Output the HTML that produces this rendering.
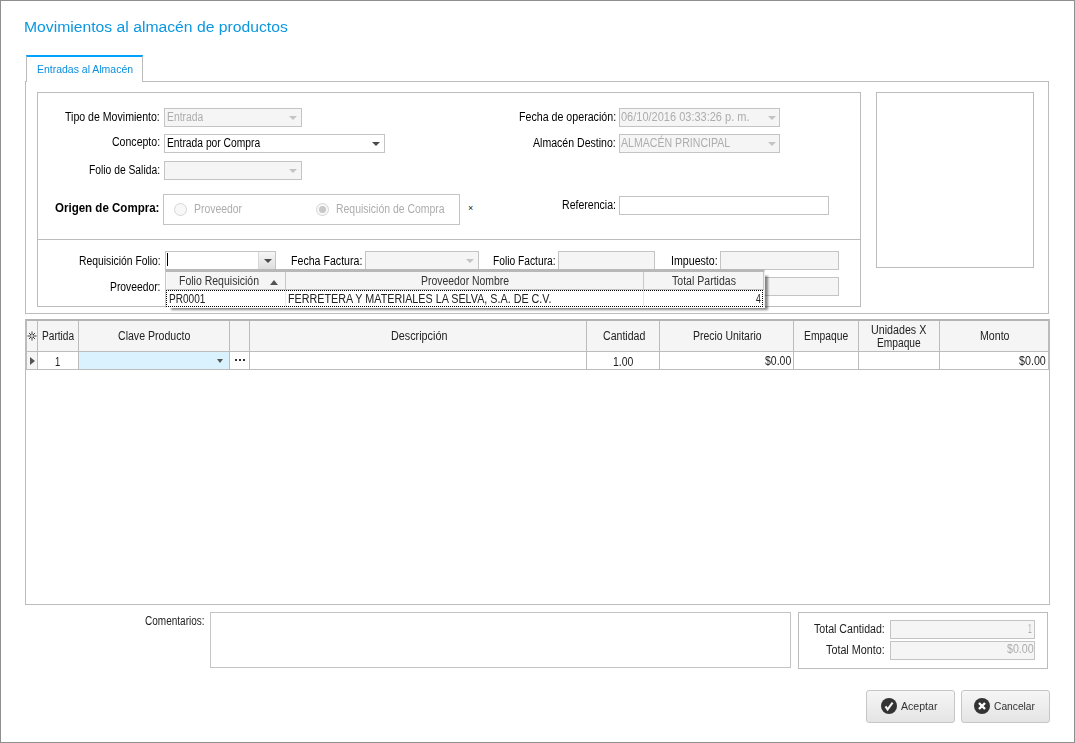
<!DOCTYPE html>
<html><head><meta charset="utf-8">
<style>
*{margin:0;padding:0;box-sizing:border-box}
html,body{width:1075px;height:743px;overflow:hidden;background:#fff}
body{position:relative;font-family:"Liberation Sans",sans-serif;font-size:12px;color:#000}
.a{position:absolute}
.t{position:absolute;white-space:pre;transform-origin:0 0;z-index:3}
.bx{position:absolute;border:1px solid #bcbcbc}
.cb{position:absolute;border:1px solid #c4c4c4;background:#f5f5f5}
.cw{position:absolute;border:1px solid #c4c4c4;background:#fff}
.ar{position:absolute;width:0;height:0;border-left:4px solid transparent;border-right:4px solid transparent;border-top:4px solid #c4c4c4}
.ard{border-top-color:#4a4a4a}
.vl{position:absolute;width:1px;background:#c0c0c0}
.hl{position:absolute;height:1px;background:#c0c0c0}
</style></head><body>
<!-- outer border -->
<div class="a" style="left:0;top:0;width:1075px;height:743px;border:1px solid #8f8f8f"></div>

<!-- tab panel -->
<div class="bx" style="left:25px;top:81px;width:1024px;height:233px"></div>
<!-- tab -->
<div class="a" style="left:26px;top:55px;width:117px;height:27px;border-left:1px solid #bcbcbc;border-right:1px solid #bcbcbc;border-top:2px solid #00a2ff;background:#fff;z-index:2"></div>

<!-- group box -->
<div class="bx" style="left:37px;top:92px;width:824px;height:215px"></div>
<div class="hl" style="left:37px;top:239px;width:824px;background:#bcbcbc"></div>
<!-- picture box -->
<div class="bx" style="left:876px;top:92px;width:158px;height:176px"></div>

<!-- combos row 1 -->
<div class="cb" style="left:164px;top:108px;width:138px;height:19px"></div>
<div class="ar" style="left:289px;top:116px"></div>
<div class="cw" style="left:164px;top:134px;width:221px;height:19px"></div>
<div class="ar ard" style="left:372px;top:142px"></div>
<div class="cb" style="left:164px;top:161px;width:138px;height:19px"></div>
<div class="ar" style="left:289px;top:169px"></div>

<!-- origen group -->
<div class="bx" style="left:163px;top:194px;width:297px;height:31px;border-color:#c4c4c4"></div>
<div class="a" style="left:174px;top:203px;width:13px;height:13px;border-radius:50%;border:1px solid #d6d6d6;background:#f8f8f8"></div>
<div class="a" style="left:316px;top:203px;width:13px;height:13px;border-radius:50%;border:1px solid #d6d6d6;background:#f8f8f8"></div>
<div class="a" style="left:319px;top:206px;width:7px;height:7px;border-radius:50%;background:#c8c8c8"></div>
<div class="a" style="left:468px;top:204px;font-size:9px;line-height:9px;color:#222">&#215;</div>

<!-- right column -->
<div class="cb" style="left:619px;top:108px;width:161px;height:19px"></div>
<div class="ar" style="left:768px;top:116px"></div>
<div class="cb" style="left:619px;top:134px;width:161px;height:19px"></div>
<div class="ar" style="left:768px;top:142px"></div>
<div class="cw" style="left:619px;top:196px;width:210px;height:19px"></div>

<!-- row 2 -->
<div class="cw" style="left:165px;top:251px;width:111px;height:19px"></div>
<div class="a" style="left:258px;top:252px;width:17px;height:17px;border-left:1px solid #d8d8d8;background:linear-gradient(#f6f6f6,#dedede)"></div>
<div class="ar ard" style="left:264px;top:259px;border-left-width:4px;border-right-width:4px;border-top-width:4px"></div>
<div class="a" style="left:167px;top:253px;width:1px;height:13px;background:#000"></div>
<div class="cb" style="left:365px;top:251px;width:114px;height:19px"></div>
<div class="ar" style="left:466px;top:259px"></div>
<div class="cb" style="left:558px;top:251px;width:97px;height:19px"></div>
<div class="cb" style="left:720px;top:251px;width:119px;height:19px"></div>
<div class="cb" style="left:165px;top:277px;width:674px;height:19px"></div>

<!-- popup -->
<div class="a" style="left:171px;top:276px;width:597px;height:34px;background:rgba(0,0,0,0.45);filter:blur(0.9px);z-index:19"></div>
<div class="a" style="left:165px;top:269px;width:600px;height:39px;background:#fff;border-left:1px solid #c8c8c8;border-right:1px solid #ececec;border-bottom:1px solid #fff;border-top:3px solid #b8b8b8;z-index:20"></div>
<div class="a" style="left:166px;top:272px;width:598px;height:18px;background:#f5f5f5;border-bottom:1px solid #c0c0c0;border-left:1px solid #fafafa;border-right:1px solid #c8c8c8;z-index:20"></div>
<div class="vl" style="left:285px;top:272px;height:17px;z-index:20;background:#c8c8c8"></div>
<div class="vl" style="left:643px;top:272px;height:17px;z-index:20;background:#c8c8c8"></div>
<div class="vl" style="left:643px;top:291px;height:15px;z-index:20;background:#e6e6e6"></div>
<div class="vl" style="left:285px;top:291px;height:15px;z-index:20;background:#ececec"></div>
<div class="a" style="left:270px;top:280px;width:0;height:0;border-left:4.5px solid transparent;border-right:4.5px solid transparent;border-bottom:5px solid #555;z-index:21"></div>
<div class="a" style="left:166px;top:290px;width:597px;height:17px;border:1px dotted #000;z-index:20"></div>

<!-- grid -->
<div class="a" style="left:25px;top:319px;width:1025px;height:286px;border:1px solid #bcbcbc;border-top-color:#b4b4b4"></div>
<div class="a" style="left:26px;top:320px;width:1023px;height:50px;border:1px solid #bcbcbc;border-top-color:#b4b4b4"></div>
<div class="a" style="left:27px;top:321px;width:1021px;height:31px;background:#f5f5f5;border-bottom:1px solid #bcbcbc"></div>
<div class="a" style="left:27px;top:352px;width:10px;height:17px;background:#f5f5f5"></div>
<div class="a" style="left:79px;top:352px;width:150px;height:17px;background:#daf2fd"></div>
<div class="vl" style="left:37px;top:321px;height:48px;background:#bcbcbc"></div>
<div class="vl" style="left:78px;top:321px;height:48px;background:#bcbcbc"></div>
<div class="vl" style="left:229px;top:321px;height:48px;background:#bcbcbc"></div>
<div class="vl" style="left:249px;top:321px;height:48px;background:#bcbcbc"></div>
<div class="vl" style="left:586px;top:321px;height:48px;background:#bcbcbc"></div>
<div class="vl" style="left:659px;top:321px;height:48px;background:#bcbcbc"></div>
<div class="vl" style="left:793px;top:321px;height:48px;background:#bcbcbc"></div>
<div class="vl" style="left:858px;top:321px;height:48px;background:#bcbcbc"></div>
<div class="vl" style="left:939px;top:321px;height:48px;background:#bcbcbc"></div>
<svg class="a" style="left:27px;top:331px" width="10" height="10" viewBox="0 0 10 10"><g stroke="#3a3a3a" stroke-width="1" stroke-linecap="square"><path d="M5 1V3.5M5 6.5V9M1 5H3.5M6.5 5H9M2.3 2.3L3.8 3.8M6.2 6.2L7.7 7.7M7.7 2.3L6.2 3.8M3.8 6.2L2.3 7.7"/></g></svg>
<div class="a" style="left:30px;top:357px;width:0;height:0;border-top:4px solid transparent;border-bottom:4px solid transparent;border-left:5px solid #555"></div>
<div class="ar ard" style="left:217px;top:359px;border-top-color:#555;border-left-width:3.5px;border-right-width:3.5px"></div>
<div class="a" style="left:235px;top:359px;width:2px;height:2px;background:#333"></div>
<div class="a" style="left:239px;top:359px;width:2px;height:2px;background:#333"></div>
<div class="a" style="left:243px;top:359px;width:2px;height:2px;background:#333"></div>

<!-- bottom -->
<div class="cw" style="left:210px;top:612px;width:581px;height:56px"></div>
<div class="bx" style="left:798px;top:612px;width:250px;height:57px"></div>
<div class="cb" style="left:890px;top:620px;width:145px;height:19px"></div>
<div class="cb" style="left:890px;top:641px;width:145px;height:19px"></div>

<!-- buttons -->
<div class="a" style="left:866px;top:690px;width:89px;height:33px;border:1px solid #c6c6c6;border-radius:3px;background:linear-gradient(#f6f6f6,#e4e4e4)"></div>
<div class="a" style="left:961px;top:690px;width:89px;height:33px;border:1px solid #c6c6c6;border-radius:3px;background:linear-gradient(#f6f6f6,#e4e4e4)"></div>
<svg class="a" style="left:881px;top:698px;z-index:4" width="16" height="16" viewBox="0 0 16 16"><circle cx="8" cy="8" r="8" fill="#333"/><path d="M4.5 8.4 L6.6 11.4 L11.6 4.6" stroke="#f4f4f4" stroke-width="2.1" fill="none"/></svg>
<svg class="a" style="left:974px;top:698px;z-index:4" width="16" height="16" viewBox="0 0 16 16"><circle cx="8" cy="8" r="8" fill="#333"/><path d="M5 5 L11 11 M11 5 L5 11" stroke="#fff" stroke-width="2.4" fill="none"/></svg>

<div class="t" style="left:23.99px;top:19px;font-size:15.5px;line-height:15.5px;font-weight:normal;color:#0b97e0;transform:scaleX(1.0137);">Movimientos al almacén de productos</div>
<div class="t" style="left:37.00px;top:64px;font-size:11px;line-height:11px;font-weight:normal;color:#0a8fe0;transform:scaleX(0.9519);z-index:5;">Entradas al Almacén</div>
<div class="t" style="left:65.00px;top:111px;font-size:12px;line-height:12px;font-weight:normal;color:#000;transform:scaleX(0.8810);">Tipo de Movimiento:</div>
<div class="t" style="left:111.70px;top:136px;font-size:12px;line-height:12px;font-weight:normal;color:#000;transform:scaleX(0.8792);">Concepto:</div>
<div class="t" style="left:88.80px;top:164px;font-size:12px;line-height:12px;font-weight:normal;color:#000;transform:scaleX(0.8582);">Folio de Salida:</div>
<div class="t" style="left:55.00px;top:202px;font-size:12px;line-height:12px;font-weight:bold;color:#000;transform:scaleX(0.9611);">Origen de Compra:</div>
<div class="t" style="left:167.00px;top:111px;font-size:12px;line-height:12px;font-weight:normal;color:#adadad;transform:scaleX(0.8618);">Entrada</div>
<div class="t" style="left:167.00px;top:137px;font-size:12px;line-height:12px;font-weight:normal;color:#000;transform:scaleX(0.8574);">Entrada por Compra</div>
<div class="t" style="left:194.00px;top:203px;font-size:12px;line-height:12px;font-weight:normal;color:#adadad;transform:scaleX(0.8669);">Proveedor</div>
<div class="t" style="left:335.60px;top:203px;font-size:12px;line-height:12px;font-weight:normal;color:#adadad;transform:scaleX(0.8708);">Requisición de Compra</div>
<div class="t" style="left:518.70px;top:111px;font-size:12px;line-height:12px;font-weight:normal;color:#000;transform:scaleX(0.8875);">Fecha de operación:</div>
<div class="t" style="left:621.30px;top:111px;font-size:12px;line-height:12px;font-weight:normal;color:#adadad;transform:scaleX(0.9172);">06/10/2016 03:33:26 p. m.</div>
<div class="t" style="left:533.00px;top:137px;font-size:12px;line-height:12px;font-weight:normal;color:#000;transform:scaleX(0.8804);">Almacén Destino:</div>
<div class="t" style="left:621.00px;top:137px;font-size:12px;line-height:12px;font-weight:normal;color:#adadad;transform:scaleX(0.8821);">ALMACÉN PRINCIPAL</div>
<div class="t" style="left:561.80px;top:199px;font-size:12px;line-height:12px;font-weight:normal;color:#000;transform:scaleX(0.8799);">Referencia:</div>
<div class="t" style="left:78.80px;top:255px;font-size:12px;line-height:12px;font-weight:normal;color:#000;transform:scaleX(0.8625);">Requisición Folio:</div>
<div class="t" style="left:291.40px;top:255px;font-size:12px;line-height:12px;font-weight:normal;color:#000;transform:scaleX(0.8847);">Fecha Factura:</div>
<div class="t" style="left:492.70px;top:255px;font-size:12px;line-height:12px;font-weight:normal;color:#000;transform:scaleX(0.8531);">Folio Factura:</div>
<div class="t" style="left:671.11px;top:255px;font-size:12px;line-height:12px;font-weight:normal;color:#000;transform:scaleX(0.8859);">Impuesto:</div>
<div class="t" style="left:110.00px;top:281px;font-size:12px;line-height:12px;font-weight:normal;color:#000;transform:scaleX(0.8601);">Proveedor:</div>
<div class="t" style="left:178.60px;top:275px;font-size:12px;line-height:12px;font-weight:normal;color:#333;transform:scaleX(0.8754);z-index:21;">Folio Requisición</div>
<div class="t" style="left:420.80px;top:275px;font-size:12px;line-height:12px;font-weight:normal;color:#333;transform:scaleX(0.8692);z-index:21;">Proveedor Nombre</div>
<div class="t" style="left:672.00px;top:275px;font-size:12px;line-height:12px;font-weight:normal;color:#333;transform:scaleX(0.8803);z-index:21;">Total Partidas</div>
<div class="t" style="left:168.90px;top:293px;font-size:12px;line-height:12px;font-weight:normal;color:#222;transform:scaleX(0.8400);z-index:21;">PR0001</div>
<div class="t" style="left:287.70px;top:293px;font-size:12px;line-height:12px;font-weight:normal;color:#222;transform:scaleX(0.8967);z-index:21;">FERRETERA Y MATERIALES LA SELVA, S.A. DE C.V.</div>
<div class="t" style="left:755.70px;top:293px;font-size:12px;line-height:12px;font-weight:normal;color:#222;transform:scaleX(0.7286);z-index:21;">4</div>
<div class="t" style="left:41.60px;top:330px;font-size:12px;line-height:12px;font-weight:normal;color:#222;transform:scaleX(0.8449);">Partida</div>
<div class="t" style="left:117.60px;top:330px;font-size:12px;line-height:12px;font-weight:normal;color:#222;transform:scaleX(0.8814);">Clave Producto</div>
<div class="t" style="left:390.50px;top:330px;font-size:12px;line-height:12px;font-weight:normal;color:#222;transform:scaleX(0.8998);">Descripción</div>
<div class="t" style="left:602.70px;top:330px;font-size:12px;line-height:12px;font-weight:normal;color:#222;transform:scaleX(0.8805);">Cantidad</div>
<div class="t" style="left:692.60px;top:330px;font-size:12px;line-height:12px;font-weight:normal;color:#222;transform:scaleX(0.8706);">Precio Unitario</div>
<div class="t" style="left:804.00px;top:330px;font-size:12px;line-height:12px;font-weight:normal;color:#222;transform:scaleX(0.8608);">Empaque</div>
<div class="t" style="left:871.40px;top:324px;font-size:12px;line-height:12px;font-weight:normal;color:#222;transform:scaleX(0.8914);">Unidades X</div>
<div class="t" style="left:876.80px;top:337px;font-size:12px;line-height:12px;font-weight:normal;color:#222;transform:scaleX(0.8511);">Empaque</div>
<div class="t" style="left:979.50px;top:330px;font-size:12px;line-height:12px;font-weight:normal;color:#222;transform:scaleX(0.8849);">Monto</div>
<div class="t" style="left:55.00px;top:356px;font-size:12px;line-height:12px;font-weight:normal;color:#222;transform:scaleX(0.7857);">1</div>
<div class="t" style="left:612.50px;top:356px;font-size:12px;line-height:12px;font-weight:normal;color:#222;transform:scaleX(0.8741);">1.00</div>
<div class="t" style="left:764.80px;top:355px;font-size:12px;line-height:12px;font-weight:normal;color:#222;transform:scaleX(0.8730);">$0.00</div>
<div class="t" style="left:1019.10px;top:355px;font-size:12px;line-height:12px;font-weight:normal;color:#222;transform:scaleX(0.8928);">$0.00</div>
<div class="t" style="left:144.90px;top:615px;font-size:12px;line-height:12px;font-weight:normal;color:#222;transform:scaleX(0.8349);">Comentarios:</div>
<div class="t" style="left:813.70px;top:623px;font-size:12px;line-height:12px;font-weight:normal;color:#222;transform:scaleX(0.8844);">Total Cantidad:</div>
<div class="t" style="left:825.80px;top:644px;font-size:12px;line-height:12px;font-weight:normal;color:#222;transform:scaleX(0.8980);">Total Monto:</div>
<div class="t" style="left:1027.60px;top:623px;font-size:12px;line-height:12px;font-weight:normal;color:#adadad;transform:scaleX(0.5571);">1</div>
<div class="t" style="left:1006.60px;top:643px;font-size:12px;line-height:12px;font-weight:normal;color:#adadad;transform:scaleX(0.8895);">$0.00</div>
<div class="t" style="left:901.20px;top:701px;font-size:11.5px;line-height:11.5px;font-weight:normal;color:#333;transform:scaleX(0.9195);z-index:5;">Aceptar</div>
<div class="t" style="left:993.70px;top:701px;font-size:11.5px;line-height:11.5px;font-weight:normal;color:#333;transform:scaleX(0.8897);z-index:5;">Cancelar</div>
</body></html>
